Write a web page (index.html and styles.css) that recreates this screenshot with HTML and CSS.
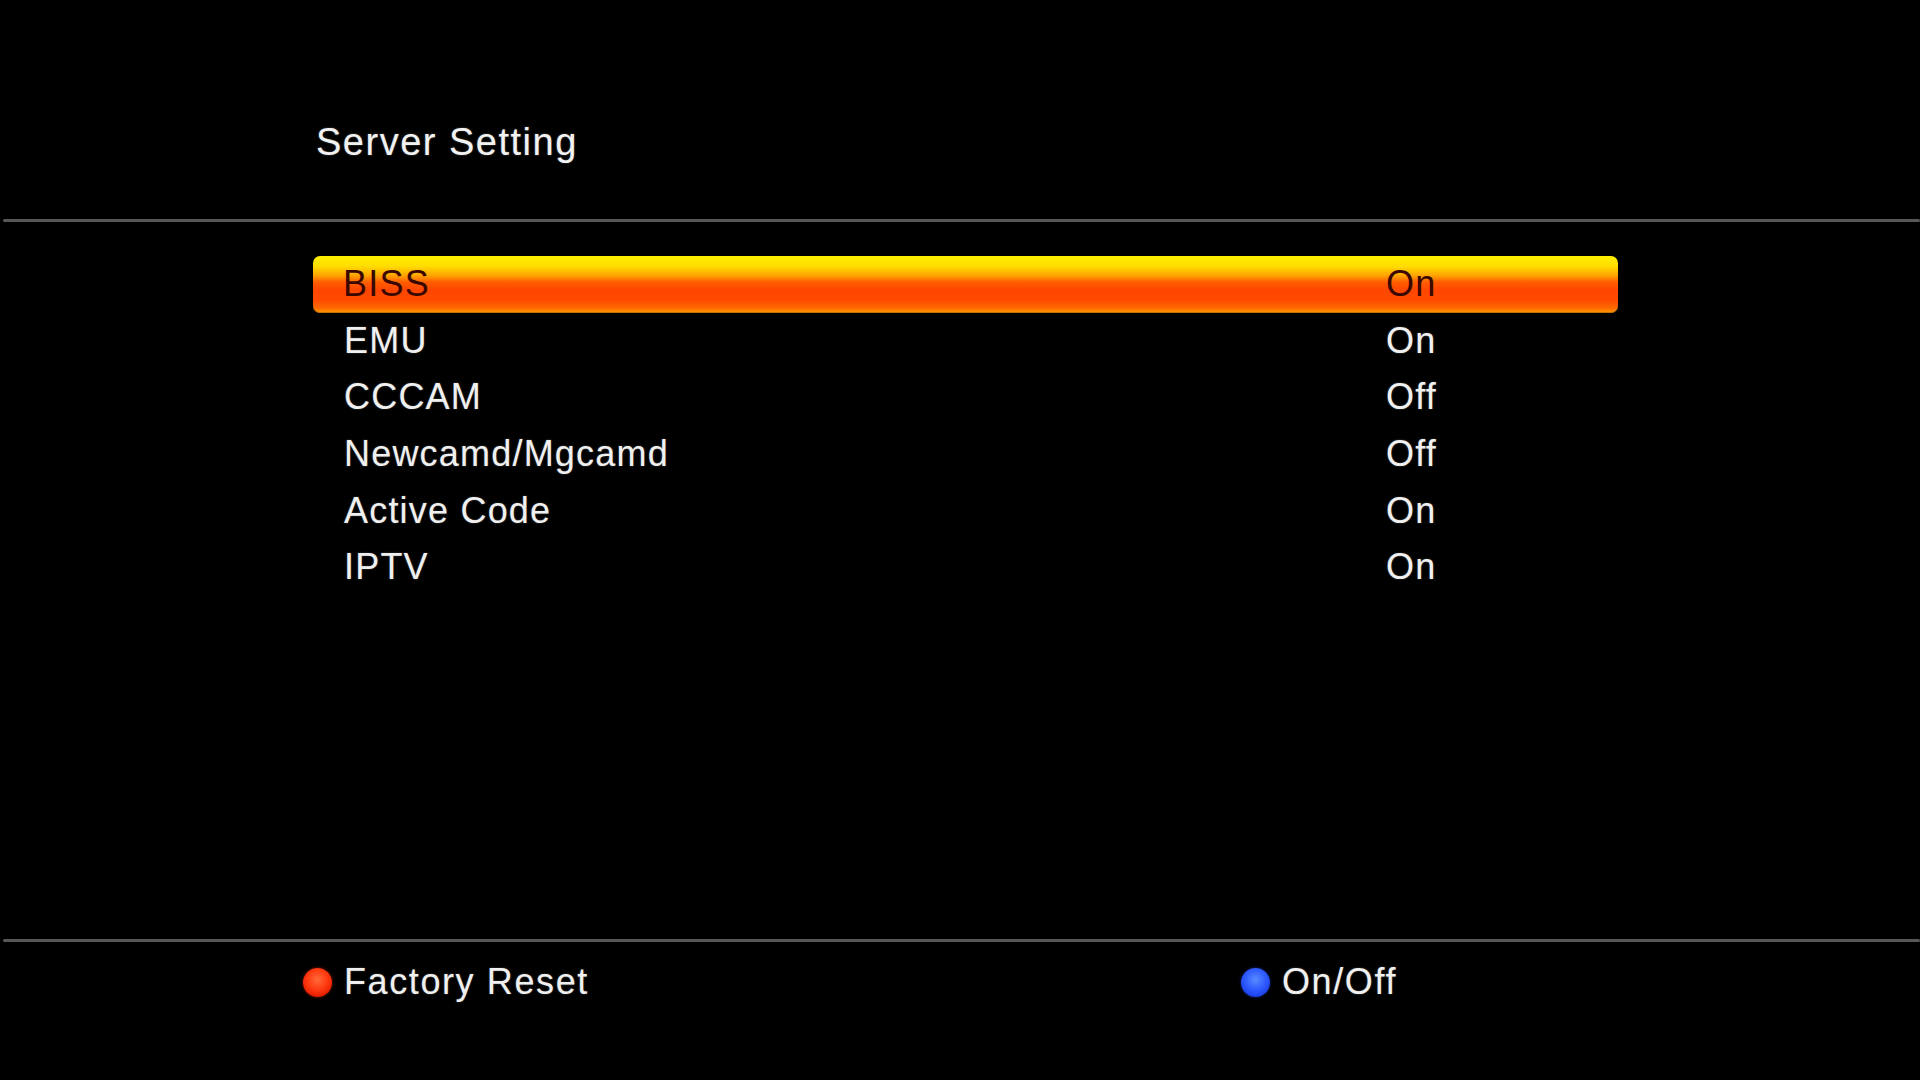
FILE: index.html
```html
<!DOCTYPE html>
<html lang="en">
<head>
<meta charset="utf-8">
<title>Server Setting</title>
<link rel="stylesheet" href="styles.css">
</head>
<body>
<div class="screen">
  <header class="header">
    <h1 class="title">Server Setting</h1>
  </header>
  <div class="rule"></div>
  <main class="main">
    <ul class="list">
      <li class="row selected"><span class="label">BISS</span><span class="value">On</span></li>
      <li class="row"><span class="label">EMU</span><span class="value">On</span></li>
      <li class="row"><span class="label">CCCAM</span><span class="value">Off</span></li>
      <li class="row"><span class="label">Newcamd/Mgcamd</span><span class="value">Off</span></li>
      <li class="row"><span class="label">Active Code</span><span class="value">On</span></li>
      <li class="row"><span class="label">IPTV</span><span class="value">On</span></li>
    </ul>
  </main>
  <div class="rule"></div>
  <footer class="footer">
    <div class="hint"><span class="dot red"></span><span class="hint-text">Factory Reset</span></div>
    <div class="hint"><span class="dot blue"></span><span class="hint-text">On/Off</span></div>
  </footer>
</div>
</body>
</html>
```
FILE: styles.css
```css
html, body {
  margin: 0;
  padding: 0;
  background: #000;
}

.screen {
  width: 1920px;
  height: 1080px;
  display: flex;
  flex-direction: column;
  background: #000;
  color: #eeeeee;
  font-family: "Liberation Sans", Arial, sans-serif;
  overflow: hidden;
}

.header {
  height: 219px;
  box-sizing: border-box;
  padding: 120px 0 0 316px;
  flex: none;
}

.title {
  margin: 0;
  font-size: 38px;
  line-height: 44px;
  font-weight: normal;
  letter-spacing: 1.5px;
  color: #f2f2f2;
  text-shadow: 0 0 2px rgba(255, 255, 255, 0.35);
}

.rule {
  flex: none;
  height: 3px;
  margin-left: 3px;
  background: #575757;
  border-radius: 2px;
}

.main {
  flex: 1;
  padding: 34px 0 0 313px;
}

.list {
  list-style: none;
  margin: 0;
  padding: 0;
  width: 1305px;
}

.row {
  display: grid;
  grid-template-columns: 1042px 1fr;
  align-items: center;
  height: 56.6px;
  padding-left: 31px;
  font-size: 36px;
  line-height: 40px;
  letter-spacing: 1.2px;
  color: #f0f0f0;
  text-shadow: 0 0 2px rgba(255, 255, 255, 0.3);
  border-radius: 7px;
}

.row.selected {
  color: #3a0800;
  text-shadow: none;
  background: linear-gradient(to bottom,
    #fff000 0%,
    #ffdc00 18%,
    #ffa400 34%,
    #ff5c00 46%,
    #ff4600 60%,
    #ff4a00 78%,
    #ff6c00 92%,
    #ffa000 100%);
  box-shadow: inset 0 -1px 0 rgba(150, 90, 0, 0.6);
}

.row.selected .label {
  margin-left: -1px;
}

.footer {
  flex: none;
  height: 138px;
  box-sizing: border-box;
  padding: 20px 0 0 303px;
  display: grid;
  grid-template-columns: 938px auto;
  align-items: start;
}

.hint {
  display: flex;
  align-items: center;
  gap: 12px;
  font-size: 36px;
  line-height: 40px;
  letter-spacing: 1.6px;
  color: #f0f0f0;
  text-shadow: 0 0 2px rgba(255, 255, 255, 0.3);
}

.dot {
  width: 29px;
  height: 29px;
  border-radius: 50%;
  flex: none;
}

.dot.red {
  background: radial-gradient(circle at 50% 40%, #ff6a3a 0%, #ff3a10 45%, #e01800 80%, #b01000 100%);
  box-shadow: 0 0 3px rgba(255, 60, 0, 0.5);
}

.dot.blue {
  background: radial-gradient(circle at 50% 40%, #5a8aff 0%, #2f5cff 45%, #1a3ae6 80%, #1028b0 100%);
  box-shadow: 0 0 3px rgba(40, 80, 255, 0.5);
}
```
